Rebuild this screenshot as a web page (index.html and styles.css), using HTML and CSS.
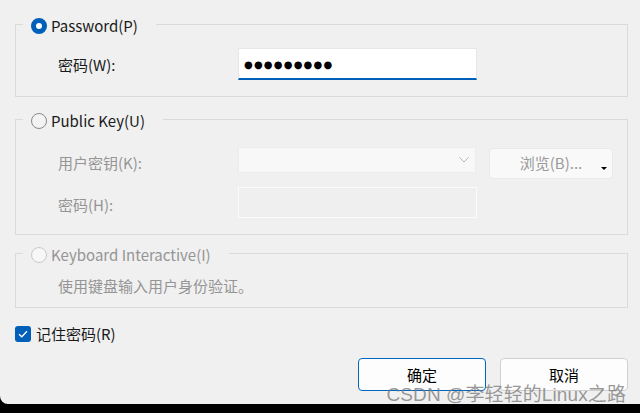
FILE: index.html
```html
<!doctype html>
<html>
    <head>
        <title>Authentication</title>
        <link rel="stylesheet" href="styles.css">
    </head>
    <body>
        <div class="window">
            <fieldset class="group g1">
                <legend class="legend">
                    <span class="radio checked"></span>
                    <span>Password(P)</span>
                </legend>
                <div class="row">
                    <span class="label">密码(W):</span>
                    <div class="input active"><span class="dots">●●●●●●●●●</span></div>
                </div>
            </fieldset>

            <fieldset class="group g2">
                <legend class="legend">
                    <span class="radio"></span>
                    <span>Public Key(U)</span>
                </legend>
                <div class="row row-key">
                    <span class="label disabled">用户密钥(K):</span>
                    <div class="combo">
                        <svg class="chevron" width="10" height="6" viewBox="0 0 10 6"><path d="M0.5 0.5 L5 5 L9.5 0.5" fill="none" stroke="#b5b5b5" stroke-width="1"/></svg>
                    </div>
                    <div class="browse">浏览(B)...<span class="tri"></span></div>
                </div>
                <div class="row row-pass">
                    <span class="label disabled">密码(H):</span>
                    <div class="input off"></div>
                </div>
            </fieldset>

            <fieldset class="group g3">
                <legend class="legend disabled">
                    <span class="radio dim"></span>
                    <span>Keyboard Interactive(I)</span>
                </legend>
                <div class="hint">使用键盘输入用户身份验证。</div>
            </fieldset>

            <div class="remember">
                <span class="check">
                    <svg width="10" height="8" viewBox="0 0 10 8"><path d="M1 4.2 L3.8 6.8 L9 1.2" fill="none" stroke="#fff" stroke-width="1.3"/></svg>
                </span>
                <span>记住密码(R)</span>
            </div>

            <div class="actions">
                <button class="btn primary">确定</button>
                <button class="btn">取消</button>
            </div>

            <div class="watermark">CSDN @李轻轻的Linux之路</div>
        </div>
    </body>
</html>
```

FILE: styles.css
```css
body {
    margin: 0;
    padding: 0;
    background-color: #000;
    font-family: 'Noto Sans CJK SC', 'Noto Sans', sans-serif;
    font-size: 15px;
    color: #1a1a1a;
}

.window {
    position: relative;
    height: 404px;
    background-color: #f0f0f0;
    border-bottom-left-radius: 8px;
    padding: 13px 12px 0 15px;
    box-sizing: border-box;
}

/* Group boxes */
.group {
    margin: 0;
    border: 1px solid #dadada;
    padding: 0 12px 16px 7px;
    min-width: 0;
}

.g2 {
    margin-top: 11px;
    padding-bottom: 16px;
}

.g3 {
    margin-top: 7px;
    padding-bottom: 11px;
}

.legend {
    display: flex;
    align-items: center;
    gap: 4px;
    height: 22px;
    box-sizing: border-box;
    padding: 4px 18px 0 8px;
    line-height: 18px;
}

.disabled {
    color: #959595;
}

.radio {
    width: 16px;
    height: 16px;
    box-sizing: border-box;
    border-radius: 50%;
    border: 1px solid #8a8a8a;
    background-color: #f3f3f3;
}

.radio.checked {
    border: 5px solid #005fb8;
    background-color: #fff;
}

.radio.dim {
    border-color: #cacaca;
    background-color: #f7f7f7;
}

.row {
    display: flex;
    align-items: center;
    padding-left: 35px;
    margin-top: 13px;
}

.label {
    width: 180px;
}

.input {
    width: 239px;
    height: 32px;
    box-sizing: border-box;
}

.input.active {
    background-color: #fff;
    border: 1px solid #e6e6e6;
    border-bottom: 2px solid #005fb8;
    padding-left: 5px;
    display: flex;
    align-items: center;
}

.dots {
    font-family: 'DejaVu Sans', sans-serif;
    font-size: 10px;
    letter-spacing: 1.2px;
    color: #000;
    padding-top: 1px;
}

.row-key {
    margin-top: 17px;
    align-items: flex-start;
}

.row-key .label {
    line-height: 26px;
    padding-top: 3px;
}

.combo {
    width: 238px;
    height: 26px;
    box-sizing: border-box;
    background-color: #f8f8f8;
    border: 1px solid #ececec;
    display: flex;
    align-items: center;
    justify-content: flex-end;
    padding-right: 6px;
}

.browse {
    position: relative;
    margin-left: 13px;
    margin-top: 1px;
    width: 124px;
    height: 31px;
    box-sizing: border-box;
    background-color: #f9f9f9;
    border: 1px solid #e9e9e9;
    border-radius: 4px;
    color: #9a9a9a;
    display: flex;
    align-items: center;
    justify-content: center;
    padding-bottom: 2px;
}

.tri {
    position: absolute;
    right: 5px;
    bottom: 8px;
    border-left: 3px solid transparent;
    border-right: 3px solid transparent;
    border-top: 3px solid #000;
}

.row-pass {
    margin-top: 8px;
}

.row-pass .label {
    padding-top: 3px;
}

.input.off {
    height: 31px;
    border: 1px solid #fbfbfb;
    background-color: #efefef;
}

.hint {
    padding-left: 35px;
    margin-top: 12px;
    line-height: 20px;
    color: #959595;
}

/* Remember checkbox */
.remember {
    display: flex;
    align-items: center;
    gap: 5px;
    margin-top: 16px;
    line-height: 20px;
}

.check {
    width: 16px;
    height: 16px;
    border-radius: 3px;
    background-color: #005fb8;
    display: flex;
    align-items: center;
    justify-content: center;
}

/* Dialog buttons */
.actions {
    display: flex;
    justify-content: flex-end;
    gap: 14px;
    margin-top: 14px;
}

.btn {
    width: 128px;
    height: 33px;
    font-family: inherit;
    font-size: 15px;
    color: #000;
    background-color: #fdfdfd;
    border: 1px solid #d0d0d0;
    border-radius: 4px;
    padding: 0;
}

.btn.primary {
    border-color: #0067c0;
}

.watermark {
    position: absolute;
    right: 14px;
    bottom: -2px;
    font-family: 'Liberation Sans', 'Noto Sans CJK SC', sans-serif;
    font-size: 19px;
    color: rgba(120, 120, 120, 0.75);
    letter-spacing: 0.1px;
}
```
